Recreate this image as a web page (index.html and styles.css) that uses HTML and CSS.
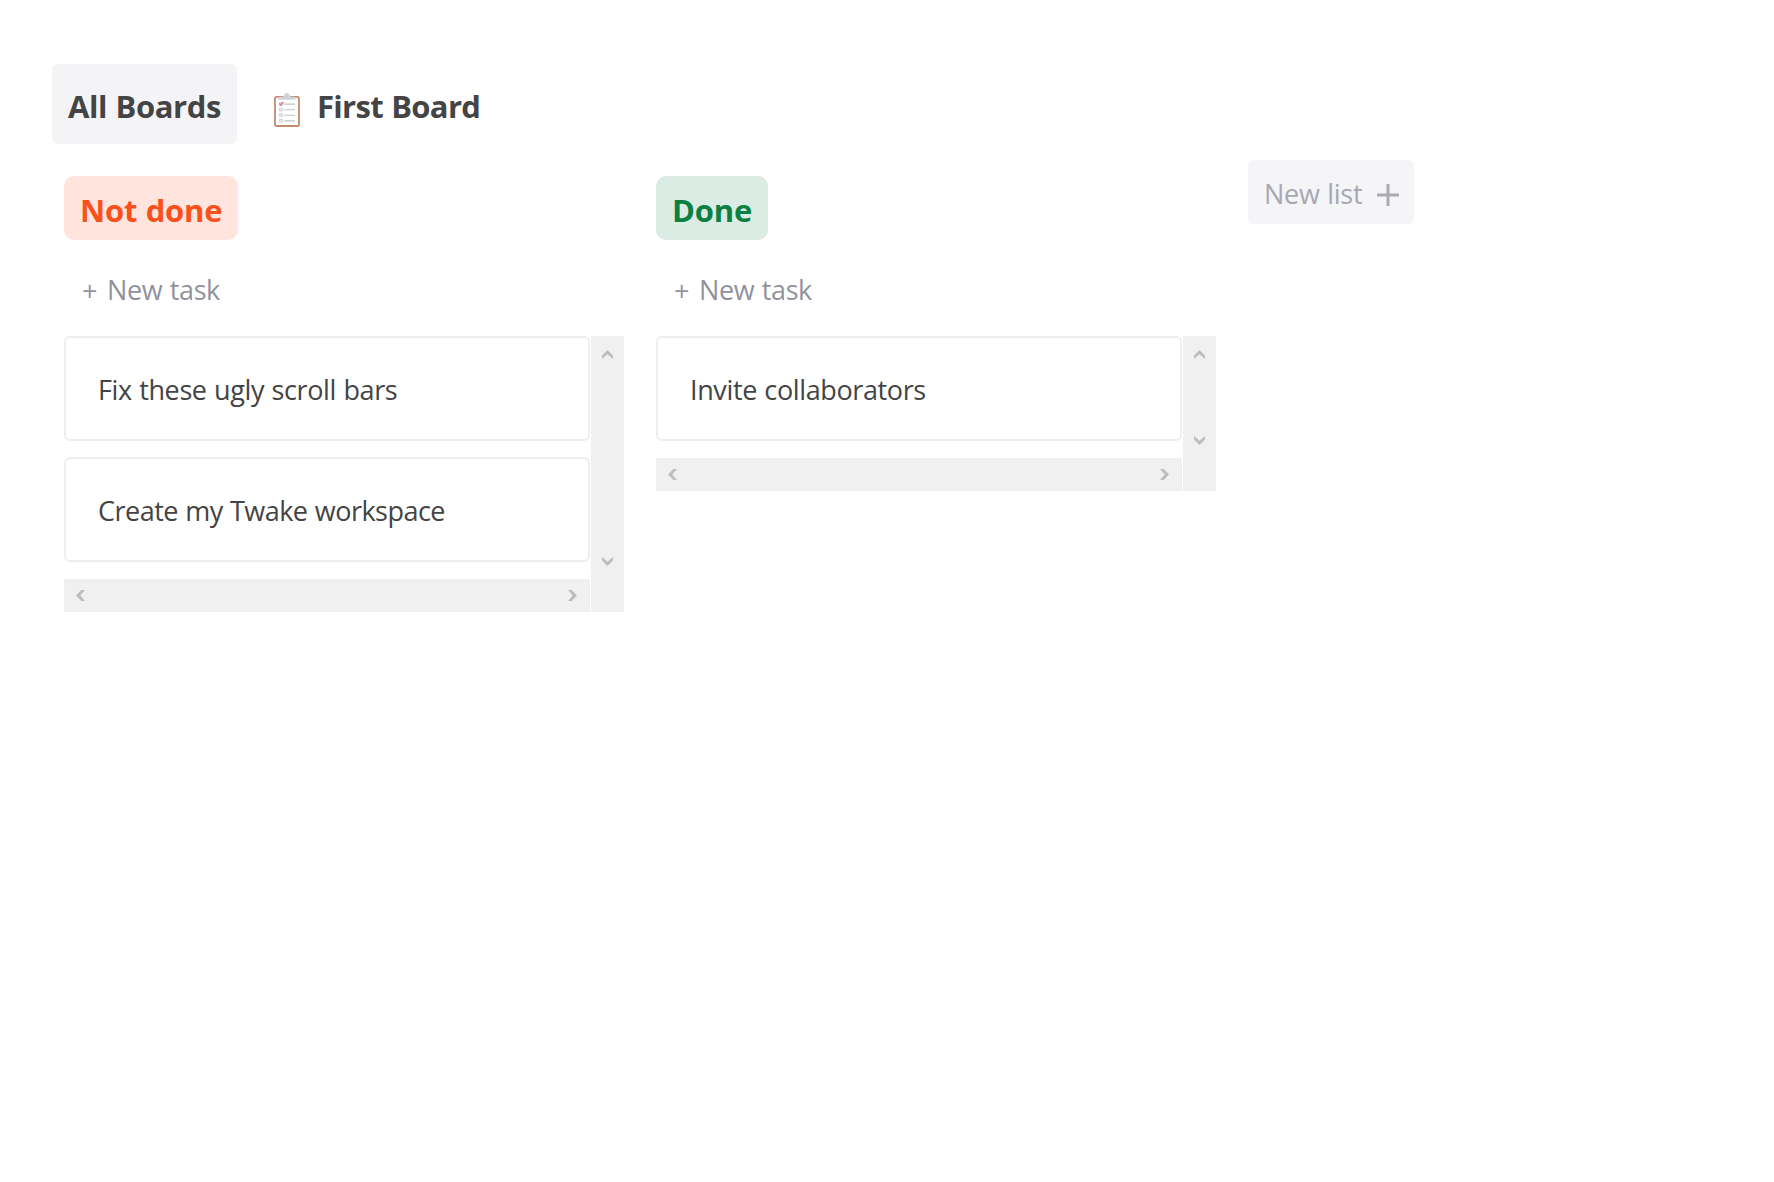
FILE: index.html
```
<!DOCTYPE html>
<html lang="en">
<head>
<meta charset="utf-8">
<title>Boards</title>
<link rel="stylesheet" href="styles.css">
</head>
<body>
<svg class="symbols" aria-hidden="true">
  <symbol id="arrow-up" viewBox="0 0 11 9"><path d="M0 5.5 5.5 0 11 5.5V9L5.5 4.2 0 9z" fill="#bdbdbd"/></symbol>
  <symbol id="arrow-down" viewBox="0 0 11 9"><path d="M0 3.5 5.5 9 11 3.5V0L5.5 4.8 0 0z" fill="#bdbdbd"/></symbol>
  <symbol id="arrow-left" viewBox="0 0 9 11"><path d="M5.3 0 0 5.5 5.3 11H9L4.3 5.5 9 0z" fill="#bdbdbd"/></symbol>
  <symbol id="arrow-right" viewBox="0 0 9 11"><path d="M3.7 0 9 5.5 3.7 11H0L4.7 5.5 0 0z" fill="#bdbdbd"/></symbol>
</svg>
<nav class="tabs">
  <a class="tab tab-active">All Boards</a>
  <a class="tab tab-first">
    <svg class="clipboard" viewBox="0 0 26 34">
      <rect x="1" y="3.8" width="24" height="29.2" rx="1.6" fill="#fff" stroke="#c28b6c" stroke-width="1.8"/>
      <path d="M4.5 6.8V4.5Q4.5 3.8 5.5 3.8H8.5Q10 3.4 10.5 2 11.2 0 13 0T15.5 2Q16 3.4 17.5 3.8H20.5Q21.5 3.8 21.5 4.5V6.8z" fill="#cdd5da"/>
      <g fill="#e6eaed" stroke="#cbd2d7" stroke-width=".9"><path d="M5.4 9.6h3v2.8h-3zM5.4 15.2h3v2.8h-3zM5.4 20.8h3v2.8h-3zM5.4 26.4h3v2.8h-3z"/></g>
      <path d="M5.3 10.5l1.6 1.5 2.5-3" fill="none" stroke="#e2788a" stroke-width="1.5"/>
      <path d="M10 11.1h11M10 16.7h11M10 22.3h11M10 27.9h11" stroke="#bcc5ca" stroke-width="1.1"/>
    </svg>
    <span>First Board</span>
  </a>
</nav>
<main class="board">
  <section class="list">
    <h2 class="pill pill-orange">Not done</h2>
    <div class="new-task"><span class="plus">+</span><span>New task</span></div>
    <div class="scroller">
      <div class="content">
        <article class="card">Fix these ugly scroll bars</article>
        <article class="card card-tight">Create my Twake workspace</article>
      </div>
      <div class="bar bar-vertical"><svg><use href="#arrow-up"/></svg><svg><use href="#arrow-down"/></svg></div>
      <div class="bar bar-horizontal"><svg><use href="#arrow-left"/></svg><svg><use href="#arrow-right"/></svg></div>
    </div>
  </section>
  <section class="list">
    <h2 class="pill pill-green">Done</h2>
    <div class="new-task"><span class="plus">+</span><span>New task</span></div>
    <div class="scroller">
      <div class="content">
        <article class="card">Invite collaborators</article>
      </div>
      <div class="bar bar-vertical"><svg><use href="#arrow-up"/></svg><svg><use href="#arrow-down"/></svg></div>
      <div class="bar bar-horizontal"><svg><use href="#arrow-left"/></svg><svg><use href="#arrow-right"/></svg></div>
    </div>
  </section>
  <button class="new-list"><span>New list</span>
    <svg class="new-list-plus" viewBox="0 0 22 22"><path d="M11 0v22M0 11h22" stroke="#aaabb2" stroke-width="3"/></svg>
  </button>
</main>
</body>
</html>
```
FILE: styles.css
```
* { box-sizing: border-box; }

body {
  margin: 0;
  padding: 64px 52px;
  background: #fff;
  color: #444;
  font: 27px/40px "Open Sans", "Noto Sans", sans-serif;
  letter-spacing: -0.38px;
  word-spacing: 0.8px;
}

.symbols { display: none; }

.tabs { display: flex; gap: 21px; }

.tab {
  display: flex;
  align-items: center;
  height: 80px;
  padding: 4px 16px 0;
  border-radius: 6px;
  font-size: 31px;
  font-weight: 700;
  letter-spacing: -0.4px;
  white-space: nowrap;
}

.tab-active { width: 185px; background: #f4f4f7; }
.tab-first { gap: 17px; letter-spacing: -0.68px; }
.clipboard { width: 26px; height: 34px; margin-top: 8px; }

.board {
  display: flex;
  align-items: flex-start;
  gap: 32px;
  padding: 16px 12px 0;
}

.list { width: 560px; padding-top: 16px; }

.pill {
  height: 64px;
  margin: 0;
  padding: 14px 16px 0;
  border-radius: 10px;
  font-size: 31px;
  font-weight: 700;
  white-space: nowrap;
}

.pill-orange { width: 174px; background: #ffe5de; color: #f9501c; letter-spacing: -0.25px; }
.pill-green { width: 112px; background: #dbece4; color: #0b8043; letter-spacing: -0.2px; }

.new-task {
  display: flex;
  gap: 10px;
  height: 96px;
  padding: 30px 17px 0 18px;
  color: #92929c;
}

.plus { padding-top: 1px; }

.scroller {
  display: grid;
  grid-template-columns: 526px 33px;
  column-gap: 1px;
}

.content { display: grid; gap: 16px; padding-bottom: 17px; }

.card {
  height: 105px;
  padding: 32px 33px 0 32px;
  border: 2px solid #eee;
  border-radius: 6px;
}

.card-tight { letter-spacing: -0.52px; }

.bar { display: flex; justify-content: space-between; background: #f0f0f0; }
.bar svg { display: block; }

.bar-vertical {
  grid-row: span 2;
  flex-direction: column;
  align-items: center;
  padding: 14px 0 46px;
}

.bar-vertical svg { width: 11px; height: 9px; }
.bar-horizontal { height: 33px; align-items: center; padding: 0 13px 0 12px; }
.bar-horizontal svg { width: 9px; height: 11px; }

.new-list {
  display: flex;
  align-items: center;
  justify-content: space-between;
  width: 166px;
  height: 64px;
  padding: 3px 15px 0 16px;
  border: 0;
  border-radius: 6px;
  background: #f5f5f8;
  color: #a7a8b0;
  font: inherit;
  letter-spacing: -0.25px;
  word-spacing: 0.8px;
}

.new-list-plus { width: 22px; height: 22px; margin-top: 3px; }
```
